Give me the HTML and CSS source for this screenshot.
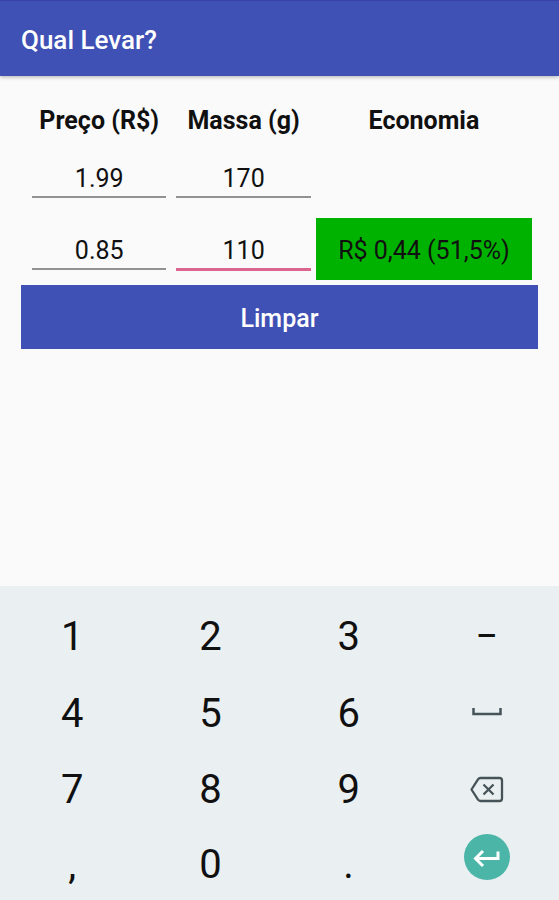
FILE: index.html
```html
<!DOCTYPE html>
<html lang="pt-BR">
<head>
<meta charset="utf-8">
<meta name="viewport" content="width=device-width, initial-scale=1">
<title>Qual Levar?</title>
<link rel="stylesheet" href="styles.css">
</head>
<body>
<header class="app-bar"><h1 class="app-title">Qual Levar?</h1></header>
<main class="content">
  <table class="compare">
    <colgroup><col class="col-input"><col class="col-input"><col></colgroup>
    <thead>
      <tr><th id="price" scope="col">Preço (R$)</th><th id="mass" scope="col">Massa (g)</th><th scope="col">Economia</th></tr>
    </thead>
    <tbody>
      <tr class="first-item">
        <td><input class="field" type="text" inputmode="decimal" aria-labelledby="price" value="1.99"></td>
        <td><input class="field" type="text" inputmode="decimal" aria-labelledby="mass" value="170"></td>
        <td></td>
      </tr>
      <tr>
        <td><input class="field" type="text" inputmode="decimal" aria-labelledby="price" value="0.85"></td>
        <td><input class="field field-active" type="text" inputmode="decimal" aria-labelledby="mass" value="110"></td>
        <td class="saving">R$ 0,44 (51,5%)</td>
      </tr>
    </tbody>
  </table>
  <button class="clear" type="button">Limpar</button>
</main>
<section class="keypad">
  <button class="key" type="button">1</button>
  <button class="key" type="button">2</button>
  <button class="key" type="button">3</button>
  <button class="key" type="button">−</button>
  <button class="key" type="button">4</button>
  <button class="key" type="button">5</button>
  <button class="key" type="button">6</button>
  <button class="key" type="button" aria-label="Espaço">
    <svg width="36" height="36" viewBox="0 0 36 36" fill="none" stroke="#46545a" stroke-width="2.500"><path d="M4.500 13v6h27v-6"/></svg>
  </button>
  <button class="key" type="button">7</button>
  <button class="key" type="button">8</button>
  <button class="key" type="button">9</button>
  <button class="key" type="button" aria-label="Apagar">
    <svg width="36" height="36" viewBox="0 0 36 36" fill="none" stroke="#46545a" stroke-width="2.300" stroke-linejoin="round"><path d="M11.500 6h19a2.500 2.500 0 0 1 2.500 2.500v18a2.500 2.500 0 0 1-2.500 2.500h-19a3 3 0 0 1-2.500-1.300L2.500 17.500l6.500-10.200A3 3 0 0 1 11.500 6z"/><path d="M14.500 12.500l10 10M24.500 12.500l-10 10"/></svg>
  </button>
  <button class="key" type="button">,</button>
  <button class="key" type="button">0</button>
  <button class="key" type="button">.</button>
  <button class="key key-enter" type="button" aria-label="Enter">
    <svg width="46" height="46" viewBox="0 0 46 46" fill="none" stroke="#fff" stroke-width="3"><circle cx="23" cy="23" r="23" fill="#4bb5a8" stroke="none"/><path d="M34 17.500v7H12"/><path d="M19 17l-7.500 7.500L19 32"/></svg>
  </button>
</section>
</body>
</html>
```
FILE: styles.css
```css
* {
  box-sizing: border-box;
}

body {
  display: flex;
  flex-direction: column;
  min-height: 100vh;
  margin: 0;
  background: #fafafa;
  color: #101010;
  font-family: Roboto, "Liberation Sans", sans-serif;
  font-size: 25px;
}

button,
input {
  border: 0;
  font: inherit;
  color: inherit;
}

.app-bar {
  padding: 22px 21px 18px;
  border-top: 1px solid #3a42a6;
  background: #3f51b5;
  box-shadow: 0 1px 4px rgba(0, 0, 0, 0.3);
}

.app-title {
  margin: 0;
  color: #fff;
  font-size: 26px;
  font-weight: 500;
  line-height: 35px;
}

.content {
  flex: 1;
  padding: 18px 21px;
}

.compare {
  width: calc(100% - 12px);
  margin: 0 6px 5px;
  border-collapse: collapse;
  table-layout: fixed;
}

.col-input {
  width: 28.6%;
}

.compare th {
  height: 52px;
  padding: 0;
  font-weight: 700;
  white-space: nowrap;
}

.compare td {
  height: 62px;
  padding: 0 5px;
  vertical-align: top;
}

.compare .first-item td {
  height: 72px;
}

.field {
  display: block;
  width: 100%;
  height: 52px;
  padding: 14px 0 0;
  border-bottom: 2px solid #929292;
  border-radius: 0;
  background: transparent;
  text-align: center;
  outline: 0;
}

.field-active {
  height: 53px;
  border-bottom: 3px solid #dc6590;
}

.compare .saving {
  padding: 2px 0 0;
  background: #00b200;
  text-align: center;
  vertical-align: middle;
}

.clear {
  display: block;
  width: 100%;
  height: 64px;
  padding: 2px 0 0;
  background: #3f51b5;
  color: #fff;
  font-weight: 500;
}

.keypad {
  display: grid;
  grid-template-columns: repeat(4, 1fr);
  grid-template-rows: 77px 76px 77px 72px;
  padding: 12px 3px 0;
  background: #eaeff1;
}

.key {
  display: flex;
  align-items: center;
  justify-content: center;
  padding: 0;
  background: transparent;
  font-size: 40px;
}

.key-enter {
  align-items: flex-start;
  padding-top: 6px;
}
```
